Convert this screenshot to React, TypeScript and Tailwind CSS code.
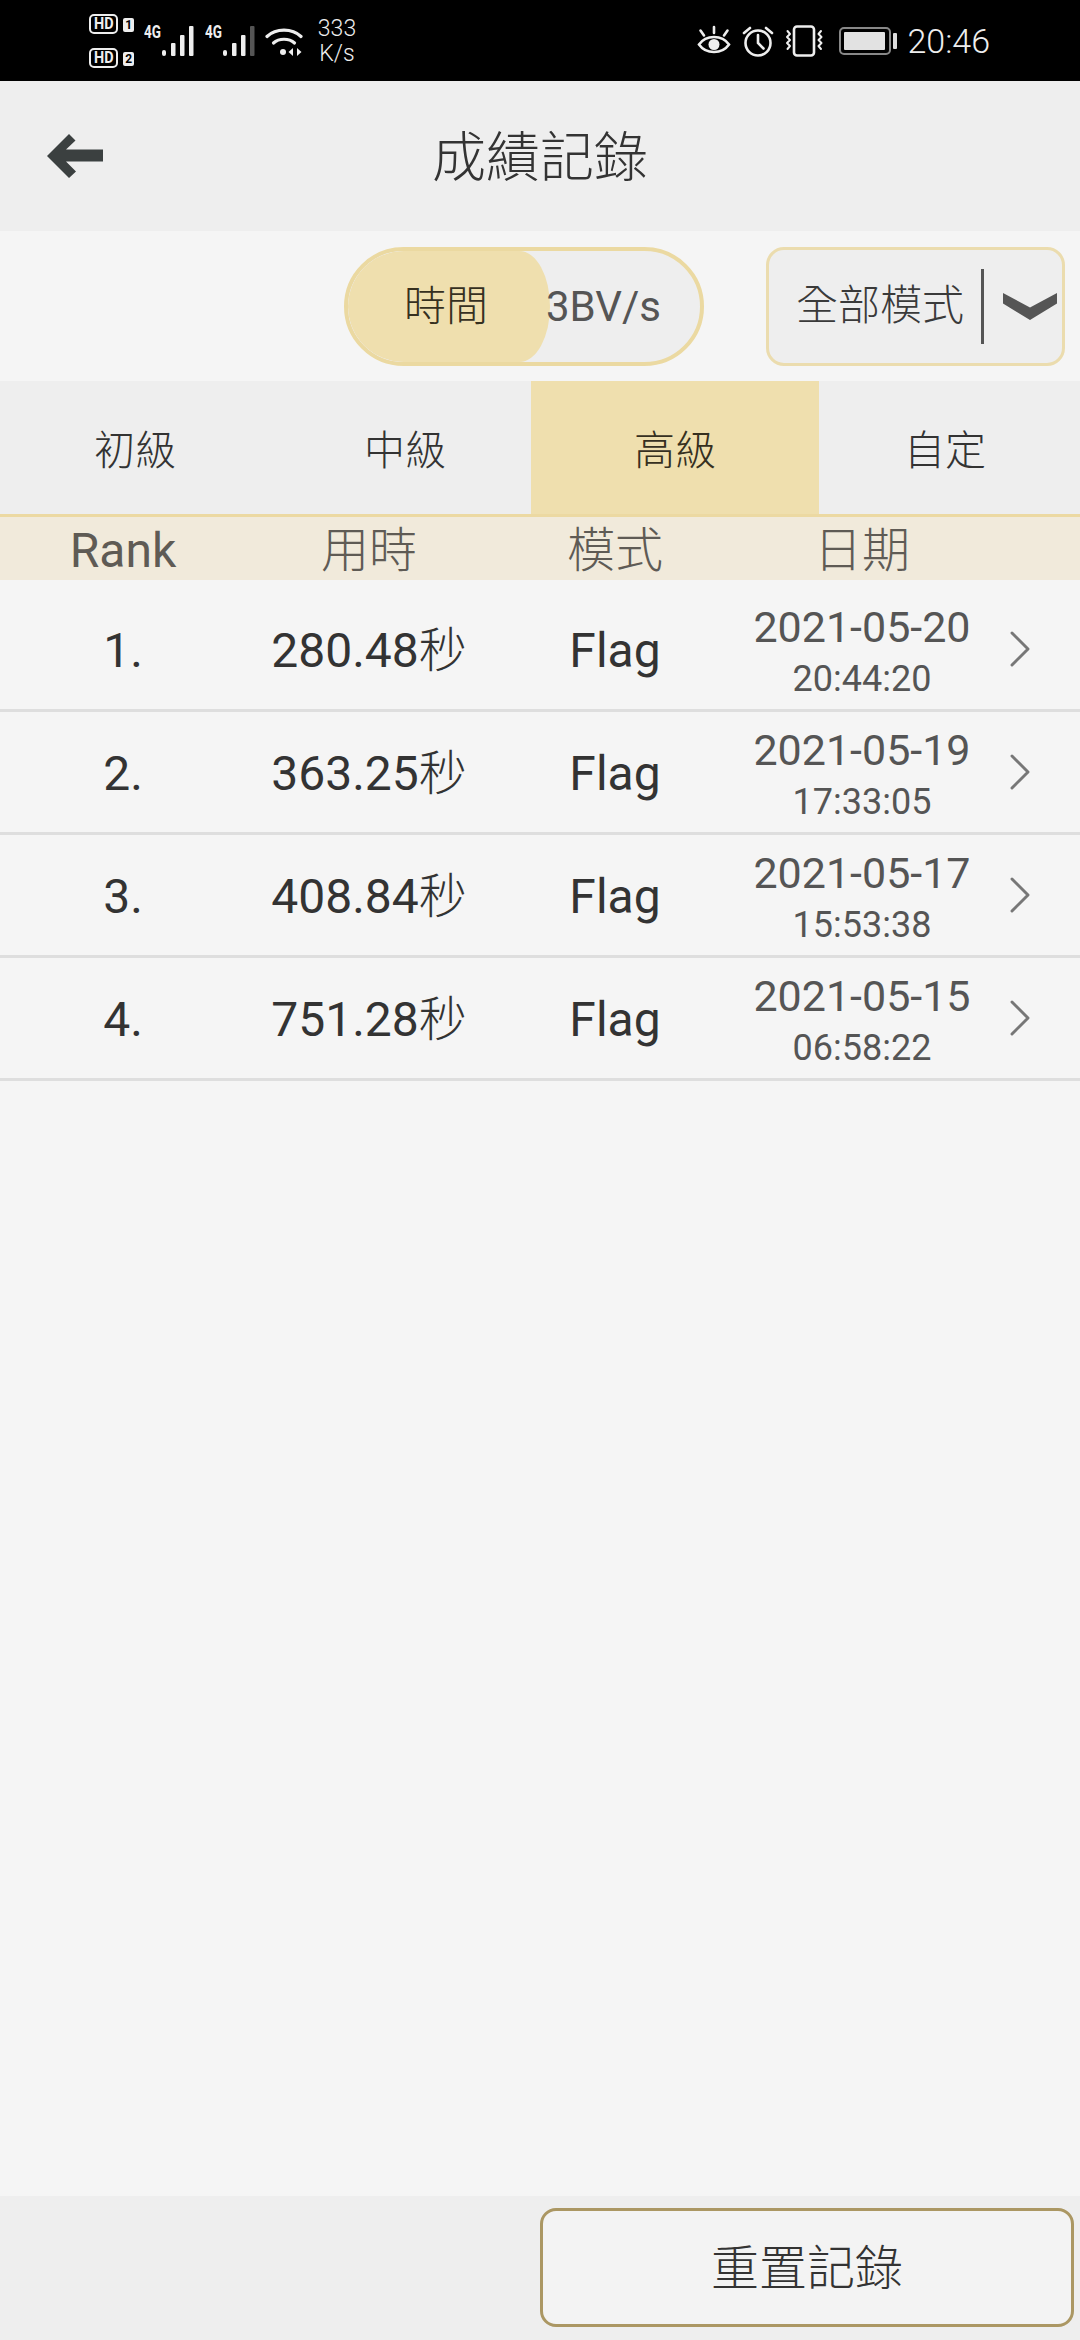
import { ChevronRight } from "lucide-react";

const rows = [
  { rank: "1.", time: "280.48", date: "2021-05-20", clock: "20:44:20" },
  { rank: "2.", time: "363.25", date: "2021-05-19", clock: "17:33:05" },
  { rank: "3.", time: "408.84", date: "2021-05-17", clock: "15:53:38" },
  { rank: "4.", time: "751.28", date: "2021-05-15", clock: "06:58:22" },
];

function Bars({ dim }: { dim?: boolean }) {
  return (
    <svg width="33" height="32" viewBox="0 0 33 32" className="block">
      <rect x="0" y="25" width="4" height="6" rx="2" fill="#eee" />
      <rect x="9" y="18" width="4.5" height="13" rx="1" fill="#eee" />
      <rect x="18" y="10" width="4.5" height="21" rx="1" fill="#eee" />
      <rect x="27" y="1" width="4.5" height="30" rx="1" fill={dim ? "#555" : "#eee"} />
    </svg>
  );
}

function HdBadge({ n }: { n: string }) {
  return (
    <div className="flex items-center gap-[5px]">
      <div className="w-[30px] h-[20px] rounded-[5px] border-[2px] border-[#eee] flex items-center justify-center text-[16px] leading-none font-bold text-[#eee]">
        <span className="scale-x-90">HD</span>
      </div>
      <div className="w-[11px] h-[14px] mt-[3px] rounded-[2px] bg-[#eee] flex items-center justify-center text-[12px] leading-none font-bold text-black">
        {n}
      </div>
    </div>
  );
}

function FourG() {
  return (
    <span className="text-[18px] leading-none font-bold mt-[-1px] w-[18px] shrink-0 scale-x-75 origin-left whitespace-nowrap">
      4G
    </span>
  );
}

function StatusBar() {
  return (
    <div className="h-[81px] bg-black flex items-center justify-between pl-[89px] pr-[90px] text-[#eee] font-['Roboto',sans-serif] shrink-0">
      <div className="flex items-center">
        <div className="flex flex-col gap-[14px] w-[45px]">
          <HdBadge n="1" />
          <HdBadge n="2" />
        </div>
        <div className="flex items-start ml-[10px] w-[51px]">
          <FourG />
          <div className="mt-[1px]"><Bars /></div>
        </div>
        <div className="flex items-start ml-[10px] w-[50px]">
          <FourG />
          <div className="mt-[1px]"><Bars dim /></div>
        </div>
        <svg width="38" height="30" viewBox="0 0 38 30" className="ml-[10px] mt-[2px]" fill="none" stroke="#eee" strokeLinecap="round">
          <path d="M2 9.500C11 1 27 1 36 9.500" strokeWidth="3.2" />
          <path d="M8.500 16C14 11 24 11 29.500 16" strokeWidth="3.2" />
          <circle cx="18" cy="25" r="3" fill="#eee" stroke="none" />
          <path d="M28 21v8l-4.500-4z" fill="#eee" stroke="none" />
          <path d="M32 21v8l4.500-4z" fill="#eee" stroke="none" />
        </svg>
        <div className="ml-[14px] flex flex-col items-center text-[23px] leading-[25px] w-[40px] font-light">
          <span>333</span>
          <span>K/s</span>
        </div>
      </div>
      <div className="flex items-center">
        <svg width="34" height="32" viewBox="0 0 34 32" fill="none" stroke="#eee" strokeLinecap="round">
          <path d="M2 19.500C9 9.500 25 9.500 32 19.500C25 29.500 9 29.500 2 19.500Z" strokeWidth="2.6" />
          <circle cx="17" cy="19.500" r="5.500" fill="#eee" stroke="none" />
          <path d="M17 2v6M3.500 5.500l3.500 5M30.500 5.500l-3.500 5" strokeWidth="2.6" />
        </svg>
        <svg width="32" height="32" viewBox="0 0 32 32" className="ml-[11px]" fill="none" stroke="#eee" strokeLinecap="round">
          <circle cx="16" cy="18" r="12.500" strokeWidth="2.6" />
          <path d="M16 10v8l5.500 5.500" strokeWidth="2.6" />
          <path d="M2 8l6-5M30 8l-6-5" strokeWidth="2.6" />
        </svg>
        <svg width="41" height="32" viewBox="0 0 41 32" className="ml-[10px]" fill="none" stroke="#eee" strokeLinecap="round" strokeLinejoin="round">
          <rect x="10" y="1.500" width="20" height="29" rx="3" strokeWidth="2.6" />
          <path d="M3.500 6l2.500 3-3 3 3 3-3 3 3 3-2.500 3" strokeWidth="2" />
          <path d="M37 6l-2.500 3 3 3-3 3 3 3-3 3 2.500 3" strokeWidth="2" />
        </svg>
        <div className="ml-[14px] w-[52px] h-[28px] rounded-[5px] border-[2px] border-[#888] p-[3px]">
          <div className="w-[41px] h-full bg-[#e2e2e2] rounded-[1px]" />
        </div>
        <div className="ml-[2px] w-[4px] h-[16px] bg-[#ddd] rounded-[1px]" />
        <span className="ml-[10px] text-[34px] leading-none font-light">20:46</span>
      </div>
    </div>
  );
}

export default function App() {
  return (
    <div className="w-[1080px] h-[2340px] flex flex-col bg-[#f5f5f5] font-['Roboto','Noto_Sans_CJK_TC',sans-serif] text-[#333]">
      <StatusBar />

      <div className="relative h-[150px] shrink-0 bg-[#eeeeee] flex items-center justify-center pt-[6px]">
        <svg width="56" height="44" viewBox="0 0 56 44" className="absolute left-[47px] top-[53px]" fill="#3b4040">
          <path d="M22 0l6.500 6.500L19 15.500h37v12H19l10 10L22 44 0 22z" />
        </svg>
        <span className="text-[54px] leading-none font-light">成績記錄</span>
      </div>

      <div className="h-[150px] shrink-0 flex items-center justify-end pr-[15px]">
        <div className="w-[360px] h-[119px] rounded-full border-[4px] border-[#ebd9a1] bg-[#eeeeee] flex items-center overflow-hidden">
          <div className="w-[202px] h-full rounded-[60px_33px_33px_60px/60px_60px_60px_60px] bg-[#efdfae] flex items-center justify-center text-[42px] font-light text-[#36301f] pr-[6px]">
            時間
          </div>
          <span className="ml-[-4px] text-[42px] text-[#555]">3BV/s</span>
        </div>
        <div className="ml-[62px] w-[299px] h-[119px] rounded-[18px] border-[3px] border-[#ebdcae] bg-[#eeeeee] flex items-center">
          <span className="ml-[27px] w-[166px] text-[42px] leading-none whitespace-nowrap text-[#3a3a3a] font-light">全部模式</span>
          <div className="ml-[19px] w-[3px] h-[75px] bg-[#555]" />
          <svg width="54" height="27" viewBox="0 0 56 28" className="ml-[19px]" fill="#555">
            <path d="M0 0l28 15L56 0v11L28 28 0 11z" />
          </svg>
        </div>
      </div>

      <div className="h-[136px] shrink-0 flex bg-[#eeeeee] border-b-[3px] border-[#ecd9a2] text-[41px] font-light pt-[8px]">
        <div className="w-[270px] flex items-center justify-center">初級</div>
        <div className="w-[261px] pl-[9px] flex items-center justify-center">中級</div>
        <div className="w-[288px] -mt-[8px] pt-[8px] bg-[#efdfae] flex items-center justify-center text-[#36301f]">高級</div>
        <div className="w-[261px] pr-[9px] flex items-center justify-center">自定</div>
      </div>

      <div className="h-[63px] shrink-0 flex items-center bg-[#f1eadb] text-[48px] leading-none text-[#5f5b55] font-light pt-[5px]">
        <div className="w-[246px] text-center font-normal">Rank</div>
        <div className="w-[246px] text-center">用時</div>
        <div className="w-[246px] text-center">模式</div>
        <div className="w-[248px] text-center">日期</div>
      </div>

      <div className="flex-1">
        {rows.map((r, i) => (
          <div
            key={r.rank}
            className={`${i === 0 ? "h-[132px] pt-[9px]" : "h-[123px]"} flex items-center border-b-[3px] border-[#dedede]`}
          >
            <div className="w-[246px] text-center text-[48px] leading-none mt-[3px]">{r.rank}</div>
            <div className="w-[246px] text-center text-[48px] leading-none whitespace-nowrap mt-[3px]">
              {r.time}
              <span className="font-light">秒</span>
            </div>
            <div className="w-[246px] text-center text-[48px] leading-none mt-[3px]">Flag</div>
            <div className="w-[248px] flex flex-col items-center text-[#555] mt-[8px]">
              <span className="text-[43px] leading-[52px]">{r.date}</span>
              <span className="text-[36px] leading-[52px]">{r.clock}</span>
            </div>
            <ChevronRight className="ml-[2px] w-[64px] h-[64px] text-[#777]" strokeWidth={1.1} />
          </div>
        ))}
      </div>

      <div className="h-[144px] shrink-0 bg-[#eeeeee] flex items-start justify-end pt-[12px] pr-[6px]">
        <div className="w-[534px] h-[119px] rounded-[16px] border-[3px] border-[#ab9763] bg-[#f3f3f3] flex items-center justify-center text-[48px] leading-none font-light pt-[2px]">
          重置記錄
        </div>
      </div>
    </div>
  );
}
